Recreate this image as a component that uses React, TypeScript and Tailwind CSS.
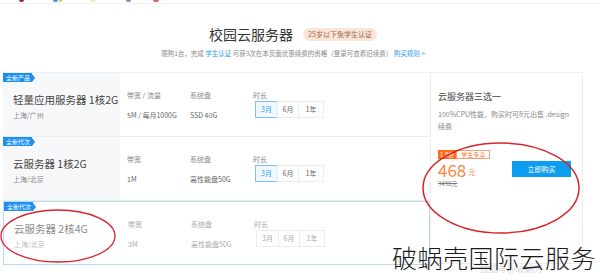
import React from 'react';

const font = { fontFamily: '"Noto Sans CJK SC", "Noto Sans", sans-serif' };

type Row = {
  badge: string;
  title: string;
  region: string;
  bwLabel: string;
  bw: string;
  disk: string;
  selected: number | null;
  active?: boolean;
};

const rows: Row[] = [
  { badge: '全新产品', title: '轻量应用服务器 1核2G', region: '上海/广州', bwLabel: '带宽 / 流量', bw: '5M / 每月1000G', disk: 'SSD 40G', selected: 0 },
  { badge: '全新代次', title: '云服务器 1核2G', region: '上海/北京', bwLabel: '带宽', bw: '1M', disk: '高性能盘50G', selected: 0 },
  { badge: '全新代次', title: '云服务器 2核4G', region: '上海/北京', bwLabel: '带宽', bw: '3M', disk: '高性能盘50G', selected: null, active: true },
];

function Badge({ text }: { text: string }) {
  return (
    <div className="absolute left-0 top-0 flex h-[9px] items-center">
      <div className="flex h-[9px] items-center bg-[#1d8ff2] pl-[3px] pr-[2px] text-[6px] leading-none text-white">{text}</div>
      <div className="h-0 w-0 border-y-[4.5px] border-l-[3px] border-y-transparent border-l-[#1d8ff2]" />
    </div>
  );
}

function ProductRow({ row }: { row: Row }) {
  const periods = ['3月', '6月', '1年'];
  const widths = ['w-[23px]', 'w-[22px]', 'w-[26px]'];
  const muted = row.active;
  return (
    <div className={`relative flex h-[64px] ${row.active ? 'border border-[#b5dcf7]' : 'border-b border-[#ececec]'}`}>
      <Badge text={row.badge} />
      <div className={`flex w-[117px] flex-col pl-[10px] ${row.active ? 'bg-white' : 'bg-[#f7f8fa]'}`}>
        <div className={`mt-[19px] whitespace-nowrap text-[10.5px] leading-[16px] ${muted ? 'text-[#8a8a8a]' : 'text-[#444]'}`}>{row.title}</div>
        <div className={`mt-[2px] text-[7px] leading-[10px] ${muted ? 'text-[#bbb]' : 'text-[#888]'}`}>{row.region}</div>
      </div>
      <div className="flex flex-1 pl-[7px]">
        <div className="flex w-[63px] flex-col">
          <div className={`mt-[17px] text-[7px] leading-[10px] ${muted ? 'text-[#aaa]' : 'text-[#888]'}`}>{row.bwLabel}</div>
          <div className={`mt-[10px] text-[7px] leading-[10px] ${muted ? 'text-[#aaa]' : 'text-[#666]'}`}>{row.bw}</div>
        </div>
        <div className="flex w-[63px] flex-col">
          <div className={`mt-[17px] text-[7px] leading-[10px] ${muted ? 'text-[#aaa]' : 'text-[#888]'}`}>系统盘</div>
          <div className={`mt-[10px] text-[7px] leading-[10px] ${muted ? 'text-[#aaa]' : 'text-[#666]'}`}>{row.disk}</div>
        </div>
        <div className="flex flex-col">
          <div className={`mt-[17px] text-[7px] leading-[10px] ${muted ? 'text-[#aaa]' : 'text-[#888]'}`}>时长</div>
          <div className="ml-[2px] mt-[1px] flex">
            {periods.map((p, i) => (
              <div
                key={p}
                className={`flex h-[17px] ${widths[i]} items-center justify-center text-[7px] ${
                  row.selected === i
                    ? 'border border-[#7ec0f2] bg-[#eef7fe] text-[#3b9ce8]'
                    : `border border-[#ececec] ${muted ? 'text-[#aaa]' : 'text-[#666]'}`
                } ${i > 0 ? '-ml-px' : ''}`}
              >
                {p}
              </div>
            ))}
          </div>
        </div>
      </div>
    </div>
  );
}

export default function App() {
  return (
    <div className="relative h-[280px] w-[600px] overflow-hidden bg-white" style={font}>
      {/* cropped icons strip */}
      <div className="flex h-[4px] items-start border-b border-[#f3f3f3]">
        <div className="ml-[19px] h-[2px] w-[5px] rounded-b-full bg-[#9b2b3c]" />
        <div className="ml-[29px] h-[2px] w-[5px] rounded-b-full bg-[#3a9be0]" />
        <div className="ml-[1px] h-[2px] w-[3px] rounded-b-full bg-[#e8c24a]" />
        <div className="ml-[28px] h-[2px] w-[6px] rounded-b-full bg-[#e9eccf]" />
        <div className="ml-[30px] h-[2px] w-[5px] rounded-b-full bg-[#8a83c4]" />
        <div className="ml-[22px] h-[2px] w-[6px] rounded-b-full bg-[#d56a6a]" />
      </div>

      <div className="ml-[3px] w-[580px]">
        <div className="mt-[22px] flex items-center justify-center gap-[10px]">
          <div className="text-[14px] leading-[16px] text-[#333]">校园云服务器</div>
          <div className="flex h-[13px] items-center rounded-[7px] bg-[#fbe4d8] px-[5px] text-[7px] text-[#9a6a52]">25岁以下免学生认证</div>
        </div>
        <div className="mt-[6px] flex justify-center text-[6.5px] leading-[10px] text-[#888]">
          <span>限购1台，完成&nbsp;</span>
          <span className="text-[#2f9ae6]">学生认证</span>
          <span>&nbsp;可获3次在本页面优惠续费的资格（登录可查看旧续费）&nbsp;</span>
          <span className="text-[#2f9ae6]">购买规则 &gt;</span>
        </div>

        <div className="mt-[14px] flex">
          <div className="w-[427px] border-t border-[#f0f0f0]">
            {rows.map((r, i) => (
              <ProductRow key={i} row={r} />
            ))}
          </div>
          <div className="flex h-[192px] w-[153px] flex-col border border-[#eeeeee] pl-[7px] pr-[8px]">
            <div className="mt-[18px] text-[9px] leading-[12px] text-[#444]">云服务器三选一</div>
            <div className="mt-[5px] text-[7px] leading-[12px] text-[#888]">100%CPU性能，购买时可8元出售 .design 续费</div>
            <div className="mt-[18px] flex items-start justify-between">
              <div className="flex flex-col">
                <div className="flex h-[9px]">
                  <div className="flex items-center bg-[#ff6a1a] px-[2px] text-[6px] leading-none text-white">1.8折</div>
                  <div className="flex items-center border border-[#f5a173] px-[4px] text-[6px] leading-none text-[#f07a3a]">学生专享</div>
                </div>
                <div className="mt-[1px] flex items-end">
                  <span className="text-[17px] leading-[19px] text-[#f6883e]">468</span>
                  <span className="mb-[3px] ml-[2px] text-[7px] leading-none text-[#f6883e]">元</span>
                </div>
                <div className="mt-[1px] text-[6px] leading-[8px] text-[#777] line-through">3498元</div>
              </div>
              <div className="mr-[3px] mt-[11px] flex h-[16px] w-[59px] items-center justify-center bg-[#0c9cf0] text-[7px] text-white">立即购买</div>
            </div>
          </div>
        </div>
      </div>

      {/* annotation ellipses */}
      <svg className="pointer-events-none absolute left-0 top-0" width="600" height="280">
        <ellipse cx="501" cy="188" rx="78" ry="45" fill="none" stroke="#d8232a" strokeWidth="1.5" />
        <ellipse cx="58" cy="236" rx="57" ry="26" fill="none" stroke="#d8232a" strokeWidth="1.3" />
      </svg>

      {/* watermark */}
      <div className="absolute left-[480px] top-[264px] text-[9px] leading-none text-[#dadada]">搜狐号@破蜗壳</div>
      <div className="absolute left-[392px] top-[242px] text-[25px] font-light leading-[30px] tracking-[0.5px] text-[#1a1a1a]">破蜗壳国际云服务</div>
    </div>
  );
}
